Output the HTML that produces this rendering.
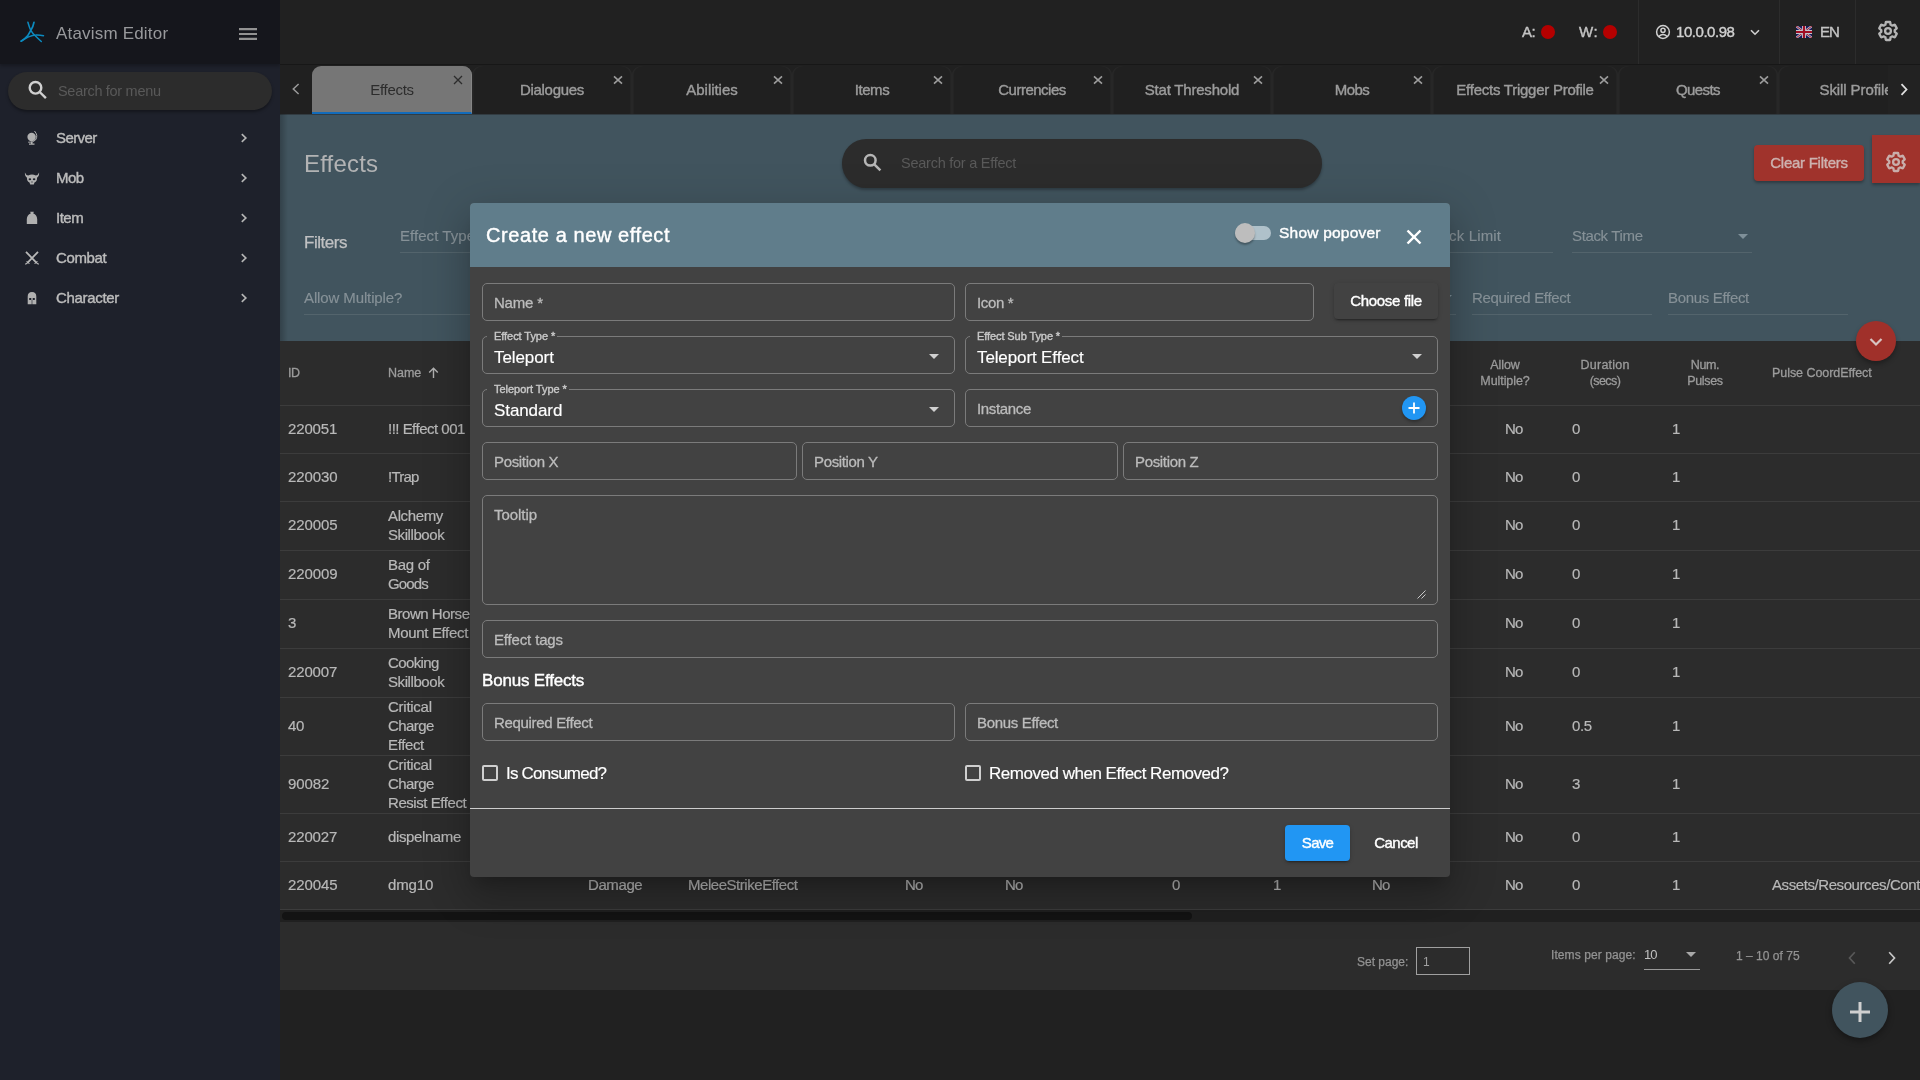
<!DOCTYPE html><html><head><meta charset="utf-8"><title>Atavism Editor</title>
<style>
*{box-sizing:border-box;margin:0;padding:0}
html,body{width:1920px;height:1080px;overflow:hidden;background:#212121;font-family:"Liberation Sans",sans-serif;color:#c8c8c8}
div,span,svg{position:absolute}
.t{white-space:nowrap;line-height:20px;height:20px;will-change:transform}
.c{text-align:center}
.sb{-webkit-text-stroke:.4px currentColor}
.sl{-webkit-text-stroke:.15px currentColor}
.sm{-webkit-text-stroke:.25px currentColor}
#side{left:0;top:0;width:280px;height:1080px;background:#1e212b}
#sidehead{left:0;top:0;width:280px;height:64px;background:#15161c;box-shadow:0 2px 3px rgba(0,0,0,.25)}
#top{left:280px;top:0;width:1640px;height:65px;background:#212121;border-bottom:1px solid #171717}
#tabs{left:280px;top:65px;width:1640px;height:49px;background:#202020}
#hero{left:280px;top:114px;width:1640px;height:227px;background:#41545e}
#table{left:280px;top:341px;width:1640px;height:569px;background:#2c2c2c}
#pager{left:280px;top:922px;width:1640px;height:68px;background:#2c2c2c}
#modal{left:470px;top:203px;width:980px;height:674px;background:#424242;border-radius:4px;box-shadow:0 11px 15px -7px rgba(0,0,0,.2),0 24px 38px 3px rgba(0,0,0,.14),0 9px 46px 8px rgba(0,0,0,.12)}
#mhead{left:0;top:0;width:980px;height:64px;background:#607d8b;border-radius:4px 4px 0 0}
.mi{font-size:15px;color:#bcbcbc}
.tab{top:0;height:49px}
.tabt{font-size:15px;color:#9c9c9c}
.fld{border:1px solid #7b7b7b;border-radius:5px;height:38px}
.ph{font-size:15px;color:#bcbcbc;-webkit-text-stroke:.3px currentColor}
.lbl{font-size:11px;color:#c8c8c8;background:#424242;padding:0 2px 0 7px;height:12px;line-height:12px}
.val{font-size:17px;color:#fff}
.row{left:0;width:1640px;border-bottom:1px solid #3c3c3c}
.td{font-size:15px;color:#b8b8b8;-webkit-text-stroke:.2px currentColor}
.th{font-size:12.5px;color:#9c9c9c;-webkit-text-stroke:.3px currentColor;height:16px;line-height:16px;margin-top:2px}
.hf{font-size:15px;color:#869197;-webkit-text-stroke:.15px currentColor}
.hl{height:1px;background:#53646c}
</style></head><body>
<div id="side">
<div id="sidehead">
<svg style="left:18px;top:20px" width="28" height="24" viewBox="0 0 28 24" fill="none" stroke="#0c8abf" stroke-width="1.500" stroke-linecap="round"><path d="M9.900 2.300 Q11.500 8 12.800 10.400 Q15 14 17 15.500 Q20 18.500 23.300 21.500"></path><path d="M16 2.300 Q15 7 13.300 9.400 Q12 12 9.600 15.900 Q6.500 19.300 3.100 21.200" stroke-width="1.700"></path><path d="M3.100 21.200 Q6.500 19 10.500 16.900 Q15 15 17.900 15 Q22 14.900 25.500 15.700"></path></svg>
<div class="t " style="left: 56px; top: 23.5px; font-size: 17px; color: rgb(152, 153, 156); letter-spacing: 0.19px;">Atavism Editor</div>
<svg style="left:238px;top:26.700px" width="20" height="14" viewBox="0 0 20 14"><path d="M1 1h18v2.200H1zM1 5.900h18v2.200H1zM1 10.800h18v2.200H1z" fill="#929292"></path></svg>
</div>
<div style="left:8px;top:72px;width:264px;height:38px;border-radius:19px;background:#2c2c2c;box-shadow:0 2px 3px rgba(0,0,0,.35)"></div>
<svg style="left:27px;top:79px" width="21" height="21" viewBox="0 0 21 21" fill="none" stroke="#d0d0d0" stroke-width="2.400"><circle cx="8.5" cy="8.8" r="5.800"></circle><path d="M12.7 13L18.9 19.2"></path></svg>
<div class="t " style="left: 58px; top: 81px; font-size: 14.5px; color: rgb(89, 89, 89); letter-spacing: -0.3px;">Search for menu</div>
<div class="t mi sb" style="left: 56px; top: 128px; letter-spacing: -0.58px;">Server</div>
<svg style="left:240px;top:132px" width="8" height="12" viewBox="0 0 8 12" fill="none" stroke="#b4b4b4" stroke-width="1.700"><path d="M1.800 2.200L5.800 6L1.800 9.800"></path></svg>
<div class="t mi sb" style="left: 56px; top: 168px; letter-spacing: -0.59px;">Mob</div>
<svg style="left:240px;top:172px" width="8" height="12" viewBox="0 0 8 12" fill="none" stroke="#b4b4b4" stroke-width="1.700"><path d="M1.800 2.200L5.800 6L1.800 9.800"></path></svg>
<div class="t mi sb" style="left: 56px; top: 208px; letter-spacing: -0.5px;">Item</div>
<svg style="left:240px;top:212px" width="8" height="12" viewBox="0 0 8 12" fill="none" stroke="#b4b4b4" stroke-width="1.700"><path d="M1.800 2.200L5.800 6L1.800 9.800"></path></svg>
<div class="t mi sb" style="left: 56px; top: 248px; letter-spacing: -0.37px;">Combat</div>
<svg style="left:240px;top:252px" width="8" height="12" viewBox="0 0 8 12" fill="none" stroke="#b4b4b4" stroke-width="1.700"><path d="M1.800 2.200L5.800 6L1.800 9.800"></path></svg>
<div class="t mi sb" style="left: 56px; top: 288px; letter-spacing: -0.32px;">Character</div>
<svg style="left:240px;top:292px" width="8" height="12" viewBox="0 0 8 12" fill="none" stroke="#b4b4b4" stroke-width="1.700"><path d="M1.800 2.200L5.800 6L1.800 9.800"></path></svg>
<svg style="left:24px;top:130px" width="16" height="16" viewBox="0 0 16 16"><circle cx="7.6" cy="7" r="4.2" fill="#b0b0b0"></circle><path d="M10.5 1 Q14.500 5.500 11.500 10 Q8.500 13 4.200 12.200" fill="none" stroke="#b0b0b0" stroke-width="1"></path><path d="M7 11.500h1.500v2.200H7zM5 13.500h5.500v1.200H5z" fill="#b0b0b0"></path></svg>
<svg style="left:24px;top:172px" width="16" height="13" viewBox="0 0 16 13"><path d="M0.900 0.600 Q1.800 3.200 4.200 3.400 Q8 1.600 11.800 3.400 Q14.200 3.200 15.100 0.600 Q15.300 4.500 13 5.700 Q13.300 9 10.500 10.600 L9.800 12.400 H6.200 L5.500 10.600 Q2.700 9 3 5.700 Q0.700 4.500 0.900 0.600Z" fill="#b0b0b0"></path><ellipse cx="5.900" cy="7.300" rx="1.300" ry="1" fill="#1e212b"></ellipse><ellipse cx="10.100" cy="7.300" rx="1.300" ry="1" fill="#1e212b"></ellipse><path d="M7.300 10h1.400" stroke="#1e212b" stroke-width="0.800"></path></svg>
<svg style="left:26px;top:211px" width="12" height="14" viewBox="0 0 12 14"><path d="M4.200 0.700 H7.800 L7.300 2.600 Q10.800 4 11.200 8 L11.200 12.900 H0.800 L0.800 8 Q1.200 4 4.700 2.600 Z" fill="#b0b0b0"></path></svg>
<svg style="left:24px;top:250px" width="16" height="16" viewBox="0 0 16 16" fill="none" stroke="#b8b8b8"><path d="M2 1.800 L12.800 13.200 M14 1.800 L3.200 13.200" stroke-width="1.800"></path><path d="M1.200 14.300 L3.200 13.200 M14.800 14.300 L12.800 13.200" stroke-width="1.200"></path><path d="M2.500 11 L5.500 14 M13.500 11 L10.500 14" stroke-width="1"></path></svg>
<svg style="left:27px;top:291px" width="10" height="14" viewBox="0 0 10 14"><path d="M0.700 5.500 Q0.700 1 5 1 Q9.300 1 9.300 5.500 V13.200 H6 V9 H7.800 V7 H5.700 V13.200 H4.300 V7 H2.200 V9 H4 V13.200 H0.700 Z" fill="#b0b0b0" fill-rule="evenodd"></path></svg>
</div>
<div id="top">
<div class="t sb" style="left: 1242px; top: 22px; font-size: 15px; color: rgb(196, 196, 196); letter-spacing: -0.59px;">A:</div>
<div style="left:1261px;top:25px;width:14px;height:14px;border-radius:7px;background:#b40000"></div>
<div class="t sb" style="left: 1299px; top: 22px; font-size: 15px; color: rgb(196, 196, 196); letter-spacing: 0.64px;">W:</div>
<div style="left:1323px;top:25px;width:14px;height:14px;border-radius:7px;background:#b40000"></div>
<div style="left:1358px;top:0;width:1px;height:64px;background:#2c2c2c"></div>
<div style="left:1499px;top:0;width:1px;height:64px;background:#2c2c2c"></div>
<div style="left:1575px;top:0;width:1px;height:64px;background:#2c2c2c"></div>
<svg style="left:1375px;top:24px" width="16" height="16" viewBox="0 0 16 16" fill="none" stroke="#d0d0d0" stroke-width="1.5"><circle cx="8" cy="8" r="6.4"></circle><circle cx="8" cy="6.3" r="2.1"></circle><path d="M3.7 12.6 Q8 8.5 12.3 12.6"></path></svg>
<div class="t sb" style="left: 1395.5px; top: 22px; font-size: 15px; color: rgb(208, 208, 208); letter-spacing: -0.45px;">10.0.0.98</div>
<svg style="left:1470px;top:29px" width="10" height="7" viewBox="0 0 10 7" fill="none" stroke="#d0d0d0" stroke-width="1.6"><path d="M1 1.2L5 5.2L9 1.2"></path></svg>
<svg style="left:1516px;top:26px" width="16" height="12" viewBox="0 0 16 12"><rect width="16" height="12" fill="#15195a"></rect><path d="M0 0L16 12M16 0L0 12" stroke="#b8b8c8" stroke-width="2.400"></path><path d="M0 0L16 12M16 0L0 12" stroke="#a00e24" stroke-width="0.900"></path><path d="M8 0V12M0 6H16" stroke="#c4c4cc" stroke-width="4"></path><path d="M8 0V12M0 6H16" stroke="#a00e24" stroke-width="2.200"></path></svg>
<div class="t sb" style="left: 1540px; top: 22px; font-size: 15px; color: rgb(196, 196, 196); letter-spacing: -0.9px;">EN</div>
<svg style="left:1596px;top:19.4px" width="24" height="24" viewBox="0 0 24 24" fill="none" stroke="#b5b5b5"><g transform="translate(12 12) scale(.9) translate(-12 -12)"><path d="M19.43 12.98c.04-.32.07-.64.07-.98s-.03-.66-.07-.98l2.11-1.65c.19-.15.24-.42.12-.64l-2-3.46c-.12-.22-.39-.3-.61-.22l-2.49 1c-.52-.4-1.08-.73-1.69-.98l-.38-2.65C14.46 2.18 14.25 2 14 2h-4c-.25 0-.46.18-.49.42l-.38 2.65c-.61.25-1.17.59-1.69.98l-2.49-1c-.23-.09-.49 0-.61.22l-2 3.46c-.13.22-.07.49.12.64l2.11 1.65c-.04.32-.07.65-.07.98s.03.66.07.98l-2.11 1.65c-.19.15-.24.42-.12.64l2 3.46c.12.22.39.3.61.22l2.49-1c.52.4 1.08.73 1.69.98l.38 2.65c.03.24.24.42.49.42h4c.25 0 .46-.18.49-.42l.38-2.65c.61-.25 1.17-.59 1.69-.98l2.49 1c.23.09.49 0 .61-.22l2-3.46c.12-.22.07-.49-.12-.64l-2.11-1.65z" stroke-width="2.600" stroke-linejoin="round"></path></g><circle cx="12" cy="12" r="2.900" stroke-width="2.300"></circle></svg>
</div>
<div id="tabs">
<svg style="left:12px;top:18px" width="8" height="12" viewBox="0 0 8 12" fill="none" stroke="#9a9a9a" stroke-width="1.500"><path d="M6.600 1L1.300 6L6.600 11"></path></svg>
<div class="tab" style="left:32px;top:1px;width:160px;height:48px;background:#767676;border-radius:9px 9px 0 0;border-bottom:2px solid #126bba;border-right:1px solid #858585"></div>
<div class="t c " style="left: 31.8px; top: 15px; width: 160px; font-size: 15px; color: rgb(44, 44, 44); letter-spacing: -0.32px;">Effects</div>
<svg style="left:173px;top:10px" width="10" height="10" viewBox="0 0 10 10" stroke="#2c2c2c" stroke-width="1.3"><path d="M1 1L9 9M9 1L1 9"></path></svg>
<div class="tab" style="left:192px;top:1px;width:160px;height:48px;border-radius:9px 9px 0 0;box-shadow:inset 1.5px 0 1.5px rgba(255,255,255,.04),inset -1.5px 0 1.5px rgba(255,255,255,.04)"></div>
<div class="t c tabt sb" style="left: 172px; top: 15px; width: 200px; letter-spacing: -0.3px;">Dialogues</div>
<svg style="left:333px;top:10px" width="10" height="10" viewBox="0 0 10 10" stroke="#9c9c9c" stroke-width="1.600"><path d="M1 1.400L9 8.600M9 1.400L1 8.600"></path></svg>
<div class="tab" style="left:352px;top:1px;width:160px;height:48px;border-radius:9px 9px 0 0;box-shadow:inset 1.5px 0 1.5px rgba(255,255,255,.04),inset -1.5px 0 1.5px rgba(255,255,255,.04)"></div>
<div class="t c tabt sb" style="left: 332px; top: 15px; width: 200px; letter-spacing: -0.04px;">Abilities</div>
<svg style="left:493px;top:10px" width="10" height="10" viewBox="0 0 10 10" stroke="#9c9c9c" stroke-width="1.600"><path d="M1 1.400L9 8.600M9 1.400L1 8.600"></path></svg>
<div class="tab" style="left:512px;top:1px;width:160px;height:48px;border-radius:9px 9px 0 0;box-shadow:inset 1.5px 0 1.5px rgba(255,255,255,.04),inset -1.5px 0 1.5px rgba(255,255,255,.04)"></div>
<div class="t c tabt sb" style="left: 491.8px; top: 15px; width: 200px; letter-spacing: -0.42px;">Items</div>
<svg style="left:653px;top:10px" width="10" height="10" viewBox="0 0 10 10" stroke="#9c9c9c" stroke-width="1.600"><path d="M1 1.400L9 8.600M9 1.400L1 8.600"></path></svg>
<div class="tab" style="left:672px;top:1px;width:160px;height:48px;border-radius:9px 9px 0 0;box-shadow:inset 1.5px 0 1.5px rgba(255,255,255,.04),inset -1.5px 0 1.5px rgba(255,255,255,.04)"></div>
<div class="t c tabt sb" style="left: 652px; top: 15px; width: 200px; letter-spacing: -0.5px;">Currencies</div>
<svg style="left:813px;top:10px" width="10" height="10" viewBox="0 0 10 10" stroke="#9c9c9c" stroke-width="1.600"><path d="M1 1.400L9 8.600M9 1.400L1 8.600"></path></svg>
<div class="tab" style="left:832px;top:1px;width:160px;height:48px;border-radius:9px 9px 0 0;box-shadow:inset 1.5px 0 1.5px rgba(255,255,255,.04),inset -1.5px 0 1.5px rgba(255,255,255,.04)"></div>
<div class="t c tabt sb" style="left: 811.7px; top: 15px; width: 200px; letter-spacing: -0.2px;">Stat Threshold</div>
<svg style="left:973px;top:10px" width="10" height="10" viewBox="0 0 10 10" stroke="#9c9c9c" stroke-width="1.600"><path d="M1 1.400L9 8.600M9 1.400L1 8.600"></path></svg>
<div class="tab" style="left:992px;top:1px;width:160px;height:48px;border-radius:9px 9px 0 0;box-shadow:inset 1.5px 0 1.5px rgba(255,255,255,.04),inset -1.5px 0 1.5px rgba(255,255,255,.04)"></div>
<div class="t c tabt sb" style="left: 972px; top: 15px; width: 200px; letter-spacing: -0.56px;">Mobs</div>
<svg style="left:1133px;top:10px" width="10" height="10" viewBox="0 0 10 10" stroke="#9c9c9c" stroke-width="1.600"><path d="M1 1.400L9 8.600M9 1.400L1 8.600"></path></svg>
<div class="tab" style="left:1152px;top:1px;width:186px;height:48px;border-radius:9px 9px 0 0;box-shadow:inset 1.5px 0 1.5px rgba(255,255,255,.04),inset -1.5px 0 1.5px rgba(255,255,255,.04)"></div>
<div class="t c tabt sb" style="left: 1131.8px; top: 15px; width: 226px; letter-spacing: -0.25px;">Effects Trigger Profile</div>
<svg style="left:1319px;top:10px" width="10" height="10" viewBox="0 0 10 10" stroke="#9c9c9c" stroke-width="1.600"><path d="M1 1.400L9 8.600M9 1.400L1 8.600"></path></svg>
<div class="tab" style="left:1338px;top:1px;width:160px;height:48px;border-radius:9px 9px 0 0;box-shadow:inset 1.5px 0 1.5px rgba(255,255,255,.04),inset -1.5px 0 1.5px rgba(255,255,255,.04)"></div>
<div class="t c tabt sb" style="left: 1317.7px; top: 15px; width: 200px; letter-spacing: -0.57px;">Quests</div>
<svg style="left:1479px;top:10px" width="10" height="10" viewBox="0 0 10 10" stroke="#9c9c9c" stroke-width="1.600"><path d="M1 1.400L9 8.600M9 1.400L1 8.600"></path></svg>
<div class="tab" style="left:1498px;top:1px;width:150px;height:48px;border-radius:9px 9px 0 0;box-shadow:inset 1.5px 0 1.5px rgba(255,255,255,.04),inset -1.5px 0 1.5px rgba(255,255,255,.04)"></div>
<div class="t c tabt sb" style="left: 1480.5px; top: 15px; width: 190px; letter-spacing: -0.1px;">Skill Profile</div>
<div style="left:1608px;top:0;width:32px;height:49px;background:#222222"></div>
<svg style="left:1620px;top:18px" width="8" height="13" viewBox="0 0 8 13" fill="none" stroke="#e0e0e0" stroke-width="1.8"><path d="M1.5 1.2L6.5 6.5L1.5 11.8"></path></svg>
</div>
<div id="hero">
<div style="left:0;top:0;width:1640px;height:1px;background:#323c42"></div>
<div style="left:0;top:0;width:8px;height:227px;background:linear-gradient(90deg,rgba(0,0,0,.22),rgba(0,0,0,0))"></div>
<div class="t " style="left: 24px; top: 40px; font-size: 24px; color: rgb(178, 179, 180); height: 30px; line-height: 30px; margin-top: -5px; letter-spacing: 0.18px;">Effects</div>
<div style="left:562px;top:25px;width:480px;height:48.500px;border-radius:24.250px;background:#2c2c2c;box-shadow:0 2px 3px rgba(0,0,0,.3)"></div>
<svg style="left:582px;top:38px" width="21" height="21" viewBox="0 0 21 21" fill="none" stroke="#b6b6b6" stroke-width="2.500"><circle cx="8.300" cy="8.300" r="5.300"></circle><path d="M12.300 12.300L18.400 18.400"></path></svg>
<div class="t " style="left: 620.5px; top: 39px; font-size: 14.5px; color: rgb(89, 89, 89); letter-spacing: -0.25px;">Search for a Effect</div>
<div style="left:1474px;top:31px;width:110px;height:36px;border-radius:4px;background:#a0332c;box-shadow:0 2px 3px rgba(0,0,0,.3)"></div>
<div class="t c sb" style="left: 1474px; top: 39px; width: 110px; font-size: 15px; color: rgb(205, 178, 175); letter-spacing: -0.26px;">Clear Filters</div>
<div style="left:1592px;top:21px;width:48px;height:48px;background:#a0332c;box-shadow:0 2px 3px rgba(0,0,0,.3)"></div>
<svg style="left:1604px;top:35.5px" width="24" height="24" viewBox="0 0 24 24" fill="none" stroke="#c9aeab"><g transform="translate(12 12) scale(.9) translate(-12 -12)"><path d="M19.43 12.98c.04-.32.07-.64.07-.98s-.03-.66-.07-.98l2.11-1.65c.19-.15.24-.42.12-.64l-2-3.46c-.12-.22-.39-.3-.61-.22l-2.49 1c-.52-.4-1.08-.73-1.69-.98l-.38-2.65C14.46 2.18 14.25 2 14 2h-4c-.25 0-.46.18-.49.42l-.38 2.65c-.61.25-1.17.59-1.69.98l-2.49-1c-.23-.09-.49 0-.61.22l-2 3.46c-.13.22-.07.49.12.64l2.11 1.65c-.04.32-.07.65-.07.98s.03.66.07.98l-2.11 1.65c-.19.15-.24.42-.12.64l2 3.46c.12.22.39.3.61.22l2.49-1c.52.4 1.08.73 1.69.98l.38 2.65c.03.24.24.42.49.42h4c.25 0 .46-.18.49-.42l.38-2.65c.61-.25 1.17-.59 1.69-.98l2.49 1c.23.09.49 0 .61-.22l2-3.46c.12-.22.07-.49-.12-.64l-2.11-1.65z" stroke-width="2.600" stroke-linejoin="round"></path></g><circle cx="12" cy="12" r="2.900" stroke-width="2.300"></circle></svg>
<div class="t sm" style="left: 24px; top: 119px; font-size: 17px; color: rgb(192, 193, 194); letter-spacing: -0.48px;">Filters</div>
<div class="t hf" style="left: 120px; top: 112px; letter-spacing: 0.05px;">Effect Type</div>
<div class="hl" style="left:120px;top:138px;width:80px"></div>
<div class="t hf" style="left: 1145.7px; top: 112px; letter-spacing: 0.16px;">Stack Limit</div>
<div class="hl" style="left:1160px;top:138px;width:113px"></div>
<div class="t hf" style="left: 1292px; top: 112px; letter-spacing: -0.35px;">Stack Time</div>
<div class="hl" style="left:1292px;top:138px;width:180px"></div>
<svg style="left:1458px;top:120px" width="10" height="5" viewBox="0 0 10 5"><path d="M0 0h10L5 5z" fill="#7f9099"></path></svg>
<svg style="left:1162px;top:181px" width="10" height="5" viewBox="0 0 10 5"><path d="M0 0h10L5 5z" fill="#7f9099"></path></svg>
<div class="t hf" style="left: 24px; top: 174px; letter-spacing: -0.12px;">Allow Multiple?</div>
<div class="hl" style="left:24px;top:200px;width:180px"></div>
<div class="hl" style="left:1160px;top:200px;width:16px"></div>
<div class="t hf" style="left: 1192px; top: 174px; letter-spacing: -0.32px;">Required Effect</div>
<div class="hl" style="left:1192px;top:200px;width:180px"></div>
<div class="t hf" style="left: 1388px; top: 174px; letter-spacing: -0.32px;">Bonus Effect</div>
<div class="hl" style="left:1388px;top:200px;width:180px"></div>
</div>
<div id="table">
<div class="row" style="top:0px;height:65px"></div>
<div class="row" style="top:64px;height:49px"></div>
<div class="row" style="top:112px;height:49px"></div>
<div class="row" style="top:160px;height:50px"></div>
<div class="row" style="top:209px;height:50px"></div>
<div class="row" style="top:258px;height:50px"></div>
<div class="row" style="top:307px;height:50px"></div>
<div class="row" style="top:356px;height:59px"></div>
<div class="row" style="top:414px;height:59px"></div>
<div class="row" style="top:472px;height:49px"></div>
<div class="row" style="top:520px;height:49px"></div>
<div class="t th" style="left: 8px; top: 22px; letter-spacing: -0.5px;">ID</div>
<div class="t th" style="left: 108px; top: 22px; letter-spacing: -0.01px;">Name</div>
<svg style="left:148px;top:26px" width="11" height="12" viewBox="0 0 11 12" fill="none" stroke="#b0b0b0" stroke-width="1.4"><path d="M5.5 11V1.5M1.2 5.6L5.5 1.3L9.8 5.6"></path></svg>
<div class="t c th" style="left: 1165px; top: 14px; width: 120px; letter-spacing: -0.09px;">Allow</div><div class="t c th" style="left: 1165px; top: 30px; width: 120px; letter-spacing: -0.07px;">Multiple?</div>
<div class="t c th" style="left: 1265px; top: 14px; width: 120px; letter-spacing: 0.22px; padding-left: 0.22px;">Duration</div><div class="t c th" style="left: 1265px; top: 30px; width: 120px; letter-spacing: -0.61px;">(secs)</div>
<div class="t c th" style="left: 1365px; top: 14px; width: 120px; letter-spacing: -0.39px;">Num.</div><div class="t c th" style="left: 1365px; top: 30px; width: 120px; letter-spacing: -0.31px;">Pulses</div>
<div class="t th" style="left: 1492px; top: 22px; letter-spacing: -0.05px;">Pulse CoordEffect</div>
<div class="t td" style="left: 8px; top: 78px; letter-spacing: -0.15px;">220051</div>
<div class="t td" style="left: 108px; top: 78px; letter-spacing: -0.51px;">!!! Effect 001</div>
<div class="t td" style="left: 1225px; top: 78px; letter-spacing: -0.9px;">No</div>
<div class="t td" style="left:1292px;top:78px;">0</div>
<div class="t td" style="left:1392px;top:78px;">1</div>
<div class="t td" style="left: 8px; top: 126px; letter-spacing: -0.09px;">220030</div>
<div class="t td" style="left: 108px; top: 126px; letter-spacing: -0.79px;">!Trap</div>
<div class="t td" style="left: 1225px; top: 126px; letter-spacing: -0.9px;">No</div>
<div class="t td" style="left:1292px;top:126px;">0</div>
<div class="t td" style="left:1392px;top:126px;">1</div>
<div class="t td" style="left: 8px; top: 174px; letter-spacing: -0.09px;">220005</div>
<div class="t td" style="left: 108px; top: 164.5px; letter-spacing: -0.37px;">Alchemy</div>
<div class="t td" style="left: 108px; top: 183.5px; letter-spacing: -0.42px;">Skillbook</div>
<div class="t td" style="left: 1225px; top: 174px; letter-spacing: -0.9px;">No</div>
<div class="t td" style="left:1292px;top:174px;">0</div>
<div class="t td" style="left:1392px;top:174px;">1</div>
<div class="t td" style="left: 8px; top: 223px; letter-spacing: -0.09px;">220009</div>
<div class="t td" style="left: 108px; top: 213.5px; letter-spacing: -0.28px;">Bag of</div>
<div class="t td" style="left: 108px; top: 232.5px; letter-spacing: -0.88px;">Goods</div>
<div class="t td" style="left: 1225px; top: 223px; letter-spacing: -0.9px;">No</div>
<div class="t td" style="left:1292px;top:223px;">0</div>
<div class="t td" style="left:1392px;top:223px;">1</div>
<div class="t td" style="left: 8px; top: 272px; letter-spacing: -0.34px;">3</div>
<div class="t td" style="left: 108px; top: 262.5px; letter-spacing: -0.47px;">Brown Horse</div>
<div class="t td" style="left: 108px; top: 281.5px; letter-spacing: -0.33px;">Mount Effect</div>
<div class="t td" style="left: 1225px; top: 272px; letter-spacing: -0.9px;">No</div>
<div class="t td" style="left:1292px;top:272px;">0</div>
<div class="t td" style="left:1392px;top:272px;">1</div>
<div class="t td" style="left: 8px; top: 321px; letter-spacing: -0.15px;">220007</div>
<div class="t td" style="left: 108px; top: 311.5px; letter-spacing: -0.62px;">Cooking</div>
<div class="t td" style="left: 108px; top: 330.5px; letter-spacing: -0.42px;">Skillbook</div>
<div class="t td" style="left: 1225px; top: 321px; letter-spacing: -0.9px;">No</div>
<div class="t td" style="left:1292px;top:321px;">0</div>
<div class="t td" style="left:1392px;top:321px;">1</div>
<div class="t td" style="left: 8px; top: 375px; letter-spacing: -0.39px;">40</div>
<div class="t td" style="left: 108px; top: 356px; letter-spacing: -0.26px;">Critical</div>
<div class="t td" style="left: 108px; top: 375px; letter-spacing: -0.58px;">Charge</div>
<div class="t td" style="left: 108px; top: 394px; letter-spacing: -0.36px;">Effect</div>
<div class="t td" style="left: 1225px; top: 375px; letter-spacing: -0.9px;">No</div>
<div class="t td" style="left: 1292px; top: 375px; letter-spacing: -0.43px;">0.5</div>
<div class="t td" style="left:1392px;top:375px;">1</div>
<div class="t td" style="left: 8px; top: 433px; letter-spacing: -0.1px;">90082</div>
<div class="t td" style="left: 108px; top: 414px; letter-spacing: -0.26px;">Critical</div>
<div class="t td" style="left: 108px; top: 433px; letter-spacing: -0.58px;">Charge</div>
<div class="t td" style="left: 108px; top: 452px; letter-spacing: -0.44px;">Resist Effect</div>
<div class="t td" style="left: 1225px; top: 433px; letter-spacing: -0.9px;">No</div>
<div class="t td" style="left:1292px;top:433px;">3</div>
<div class="t td" style="left:1392px;top:433px;">1</div>
<div class="t td" style="left: 8px; top: 486px; letter-spacing: -0.15px;">220027</div>
<div class="t td" style="left: 108px; top: 486px; letter-spacing: -0.38px;">dispelname</div>
<div class="t td" style="left: 1225px; top: 486px; letter-spacing: -0.9px;">No</div>
<div class="t td" style="left:1292px;top:486px;">0</div>
<div class="t td" style="left:1392px;top:486px;">1</div>
<div class="t td" style="left: 8px; top: 534px; letter-spacing: -0.09px;">220045</div>
<div class="t td" style="left: 108px; top: 534px; letter-spacing: -0.14px;">dmg10</div>
<div class="t td" style="left: 1225px; top: 534px; letter-spacing: -0.9px;">No</div>
<div class="t td" style="left:1292px;top:534px;">0</div>
<div class="t td" style="left:1392px;top:534px;">1</div>
<div class="t td" style="left: 308px; top: 534px; letter-spacing: -0.4px;">Damage</div>
<div class="t td" style="left: 408px; top: 534px; letter-spacing: -0.46px;">MeleeStrikeEffect</div>
<div class="t td" style="left: 625px; top: 534px; letter-spacing: -0.9px;">No</div>
<div class="t td" style="left: 725px; top: 534px; letter-spacing: -0.9px;">No</div>
<div class="t td" style="left:892px;top:534px;">0</div>
<div class="t td" style="left:992.5px;top:534px;">1</div>
<div class="t td" style="left: 1092px; top: 534px; letter-spacing: -0.9px;">No</div>
<div class="t td" style="left: 1492px; top: 534px; letter-spacing: -0.42px;">Assets/Resources/Content</div>
</div>
<div style="left:280px;top:910px;width:1640px;height:12px;background:#202020"></div>
<div style="left:282px;top:912px;width:910px;height:8px;border-radius:4px;background:#131313"></div>
<div id="pager">
<div class="t sm" style="left: 1077px; top: 30px; font-size: 12px; color: rgb(147, 147, 147); letter-spacing: -0.01px;">Set page:</div>
<div style="left:1136px;top:25px;width:54px;height:28px;border:1px solid #a0a0a0"></div>
<div class="t " style="left:1143px;top:30px;font-size:12px;color:#a0a0a0">1</div>
<div class="t sm" style="left: 1271px; top: 23px; font-size: 12px; color: rgb(147, 147, 147); letter-spacing: 0.09px;">Items per page:</div>
<div class="t " style="left: 1364px; top: 23px; font-size: 13px; color: rgb(192, 192, 192); letter-spacing: -0.9px;">10</div>
<svg style="left:1406px;top:30px" width="10" height="5" viewBox="0 0 10 5"><path d="M0 0h10L5 5z" fill="#a8a8a8"></path></svg>
<div style="left:1364px;top:47px;width:56px;height:1px;background:#9a9a9a"></div>
<div class="t sm" style="left: 1456px; top: 24px; font-size: 12px; color: rgb(147, 147, 147); letter-spacing: 0.02px;">1 – 10 of 75</div>
<svg style="left:1568px;top:29px" width="8" height="14" viewBox="0 0 8 14" fill="none" stroke="#585858" stroke-width="1.700"><path d="M6.800 1.200L1.500 7L6.800 12.800"></path></svg>
<svg style="left:1608px;top:29px" width="8" height="14" viewBox="0 0 8 14" fill="none" stroke="#c8c8c8" stroke-width="1.7"><path d="M1.2 1.2L6.5 7L1.2 12.8"></path></svg>
</div>
<div style="left:1856px;top:321px;width:40px;height:40px;border-radius:20px;background:#a0302a;box-shadow:0 3px 5px rgba(0,0,0,.3)"></div>
<svg style="left:1869px;top:337px" width="14" height="10" viewBox="0 0 14 10" fill="none" stroke="#d8c4c2" stroke-width="2.2"><path d="M1.500 2L7 7.500L12.500 2"></path></svg>
<div style="left:1832px;top:982px;width:56px;height:56px;border-radius:28px;background:#41545e;box-shadow:0 3px 6px rgba(0,0,0,.35)"></div>
<svg style="left:1848.500px;top:1001px" width="22" height="22" viewBox="0 0 22 22" stroke="#d0d0d0" stroke-width="3"><path d="M11 1V21M1 11H21"></path></svg>
<div id="modal">
<div id="mhead"></div>
<div class="t sb" style="left: 16px; top: 22px; font-size: 20px; color: rgb(255, 255, 255); height: 26px; line-height: 26px; margin-top: -3px; letter-spacing: 0.58px;">Create a new effect</div>
<div style="left:765px;top:23px;width:36px;height:14px;border-radius:7px;background:#afc1ca"></div>
<div style="left:765px;top:20px;width:20px;height:20px;border-radius:10px;background:#bdbdbd;box-shadow:0 2px 2px rgba(0,0,0,.3)"></div>
<div class="t sb" style="left: 809.3px; top: 20px; font-size: 15.5px; color: rgb(255, 255, 255); letter-spacing: 0.22px;">Show popover</div>
<svg style="left:936px;top:26px" width="16" height="16" viewBox="0 0 16 16" stroke="#fff" stroke-width="2.400"><path d="M1.500 1.500L14.500 14.500M14.500 1.500L1.500 14.500"></path></svg>
<div class="fld" style="left:12px;top:80px;width:473px;height:38px"></div><div class="t ph" style="left: 24px; top: 89.5px; letter-spacing: -0.21px;">Name *</div>
<div class="fld" style="left:495px;top:80px;width:349px;height:38px"></div><div class="t ph" style="left: 507px; top: 89.5px; letter-spacing: -0.35px;">Icon *</div>
<div style="left:864px;top:80px;width:104px;height:36px;border-radius:4px;background:#424242;box-shadow:0 3px 1px -2px rgba(0,0,0,.2),0 2px 2px 0 rgba(0,0,0,.14),0 1px 5px 0 rgba(0,0,0,.12)"></div>
<div class="t c sb" style="left: 864px; top: 88px; width: 104px; font-size: 15px; color: rgb(255, 255, 255); letter-spacing: -0.3px;">Choose file</div>
<div class="fld" style="left:12px;top:133px;width:473px;height:38px"></div><div class="t lbl sb" style="left: 17px; top: 127px; letter-spacing: -0.06px;">Effect Type *</div><div class="t val sl" style="left: 24px; top: 144.5px; letter-spacing: -0.08px;">Teleport</div><svg style="left:459px;top:151px" width="10" height="5" viewBox="0 0 10 5"><path d="M0 0h10L5 5z" fill="#d0d0d0"></path></svg>
<div class="fld" style="left:495px;top:133px;width:473px;height:38px"></div><div class="t lbl sb" style="left: 500px; top: 127px; letter-spacing: -0.09px;">Effect Sub Type *</div><div class="t val sl" style="left: 507px; top: 144.5px; letter-spacing: -0.12px;">Teleport Effect</div><svg style="left:942px;top:151px" width="10" height="5" viewBox="0 0 10 5"><path d="M0 0h10L5 5z" fill="#d0d0d0"></path></svg>
<div class="fld" style="left:12px;top:186px;width:473px;height:38px"></div><div class="t lbl sb" style="left: 17px; top: 180px; letter-spacing: -0.02px;">Teleport Type *</div><div class="t val sl" style="left: 24px; top: 197.5px; letter-spacing: -0.09px;">Standard</div><svg style="left:459px;top:204px" width="10" height="5" viewBox="0 0 10 5"><path d="M0 0h10L5 5z" fill="#d0d0d0"></path></svg>
<div class="fld" style="left:495px;top:186px;width:473px;height:38px"></div><div class="t ph" style="left: 507px; top: 195.5px; letter-spacing: -0.35px;">Instance</div>
<div style="left:932px;top:193px;width:24px;height:24px;border-radius:12px;background:#2196f3;box-shadow:0 2px 3px rgba(0,0,0,.3)"></div>
<svg style="left:938px;top:199px" width="12" height="12" viewBox="0 0 12 12" stroke="#fff" stroke-width="1.8"><path d="M6 0.5V11.5M0.5 6H11.5"></path></svg>
<div class="fld" style="left:12px;top:239px;width:315px;height:38px"></div><div class="t ph" style="left: 24px; top: 248.5px; letter-spacing: -0.34px;">Position X</div>
<div class="fld" style="left:332px;top:239px;width:316px;height:38px"></div><div class="t ph" style="left: 344px; top: 248.5px; letter-spacing: -0.36px;">Position Y</div>
<div class="fld" style="left:653px;top:239px;width:315px;height:38px"></div><div class="t ph" style="left: 665px; top: 248.5px; letter-spacing: -0.33px;">Position Z</div>
<div class="fld" style="left:12px;top:292px;width:956px;height:110px"></div><div class="t ph" style="left: 24px; top: 301.5px; letter-spacing: -0.06px;">Tooltip</div>
<svg style="left:947px;top:387px" width="9" height="9" viewBox="0 0 9 9" stroke="#c8c8c8" stroke-width="1"><path d="M0.5 8.5L8.5 0.5M4.5 8.5L8.5 4.5"></path></svg>
<div class="fld" style="left:12px;top:417px;width:956px;height:38px"></div><div class="t ph" style="left: 24px; top: 426.5px; letter-spacing: -0.16px;">Effect tags</div>
<div class="t sb" style="left: 12px; top: 468px; font-size: 17px; color: rgb(255, 255, 255); letter-spacing: -0.19px;">Bonus Effects</div>
<div class="fld" style="left:12px;top:500px;width:473px;height:38px"></div><div class="t ph" style="left: 24px; top: 509.5px; letter-spacing: -0.32px;">Required Effect</div>
<div class="fld" style="left:495px;top:500px;width:473px;height:38px"></div><div class="t ph" style="left: 507px; top: 509.5px; letter-spacing: -0.32px;">Bonus Effect</div>
<div style="left:12px;top:562px;width:16px;height:16px;border:2px solid #cfcfcf;border-radius:2px"></div>
<div class="t sl" style="left: 36px; top: 561px; font-size: 17px; color: rgb(255, 255, 255); letter-spacing: -0.78px;">Is Consumed?</div>
<div style="left:495px;top:562px;width:16px;height:16px;border:2px solid #cfcfcf;border-radius:2px"></div>
<div class="t sl" style="left: 519px; top: 561px; font-size: 17px; color: rgb(255, 255, 255); letter-spacing: -0.48px;">Removed when Effect Removed?</div>
<div style="left:0;top:604.5px;width:980px;height:1.500px;background:#cdcdcd"></div>
<div style="left:815px;top:622px;width:65px;height:36px;border-radius:4px;background:#2196f3;box-shadow:0 3px 1px -2px rgba(0,0,0,.2),0 2px 2px 0 rgba(0,0,0,.14),0 1px 5px 0 rgba(0,0,0,.12)"></div>
<div class="t c sb" style="left: 815px; top: 630px; width: 65px; font-size: 15px; color: rgb(255, 255, 255); letter-spacing: -0.73px;">Save</div>
<div class="t c sb" style="left: 886px; top: 630px; width: 80px; font-size: 15px; color: rgb(255, 255, 255); letter-spacing: -0.54px;">Cancel</div>
</div>
</body></html>
